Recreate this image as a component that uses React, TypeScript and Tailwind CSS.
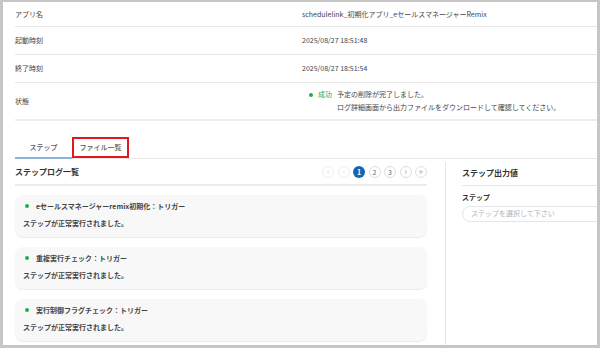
import { ChevronLeft, ChevronRight, ChevronsLeft, ChevronsRight } from "lucide-react";

const font = {
  fontFamily: '"Noto Sans CJK JP", "Liberation Sans", sans-serif',
};

const infoRows = [
  { label: "アプリ名", value: "schedulelink_初期化アプリ_eセールスマネージャーRemix", h: "h-[25px]" },
  { label: "起動時刻", value: "2025/08/27 18:51:48", h: "h-[28px]" },
  { label: "終了時刻", value: "2025/08/27 18:51:54", h: "h-[28px]" },
];

const steps = [
  "eセールスマネージャーremix初期化：トリガー",
  "重複実行チェック：トリガー",
  "実行制御フラグチェック：トリガー",
];

function PageButton({ children, active, disabled }: { children: React.ReactNode; active?: boolean; disabled?: boolean }) {
  return (
    <div
      className={
        active
          ? "w-[12px] h-[12px] rounded-full bg-[#1565b5] text-white flex items-center justify-center text-[7px] font-bold"
          : disabled
          ? "w-[12px] h-[12px] rounded-full border border-[#ececec] text-[#d0d0d0] flex items-center justify-center"
          : "w-[12px] h-[12px] rounded-full border border-[#dedede] text-[#666] flex items-center justify-center text-[7px]"
      }
    >
      {children}
    </div>
  );
}

export default function App() {
  return (
    <div
      style={font}
      className="w-[600px] h-[348px] bg-white border-t-2 border-l-[3px] border-r-[3px] border-b-[3px] border-[#c6c6c6] overflow-hidden text-[#555] text-[7px]"
    >
      <div className="pl-3 flex flex-col">
        {/* 基本情報 */}
        {infoRows.map((row) => (
          <div key={row.label} className={`${row.h} flex items-center border-b border-[#e6e6e6]`}>
            <div className="w-[287px] text-[#444]">{row.label}</div>
            <div className="text-[#444]">{row.value}</div>
          </div>
        ))}
        <div className="h-[38px] flex items-center border-b-2 border-[#ececec]">
          <div className="w-[287px] text-[#444]">状態</div>
          <div className="flex items-start gap-[5px] pl-[7px] leading-[13px]">
            <span className="w-[4px] h-[4px] rounded-full bg-[#1fae4f] mt-[5px]"></span>
            <span className="text-[#2aa84e]">成功</span>
            <div className="text-[#444]">
              <div>予定の削除が完了しました。</div>
              <div>ログ詳細画面から出力ファイルをダウンロードして確認してください。</div>
            </div>
          </div>
        </div>

        {/* タブ */}
        <div className="mt-[16px] flex items-end border-b border-[#e8e8e8]">
          <div className="w-[57px] h-[21px] flex items-center justify-center border-b-2 border-[#8fb4dc] -mb-px text-[#555] font-medium">
            ステップ
          </div>
          <div className="w-[57px] h-[21px] flex items-center justify-center border-2 border-[#e4161b] text-[#555] font-medium">
            ファイル一覧
          </div>
        </div>

        {/* 下段 */}
        <div className="flex">
          {/* ステップログ一覧 */}
          <div className="w-[412px] shrink-0 flex flex-col">
            <div className="h-[27px] flex items-center justify-between border-b-2 border-[#ececec] pt-[1px]">
              <div className="text-[#333] font-bold text-[8px]">ステップログ一覧</div>
              <div className="flex gap-[3.5px]">
                <PageButton disabled>
                  <ChevronsLeft size={6} />
                </PageButton>
                <PageButton disabled>
                  <ChevronLeft size={6} />
                </PageButton>
                <PageButton active>1</PageButton>
                <PageButton>2</PageButton>
                <PageButton>3</PageButton>
                <PageButton>
                  <ChevronRight size={6} />
                </PageButton>
                <PageButton>
                  <ChevronsRight size={6} />
                </PageButton>
              </div>
            </div>
            <div className="flex flex-col gap-[10px] pt-[9px]">
              {steps.map((s) => (
                <div
                  key={s}
                  className="h-[42px] rounded-[8px] bg-[#f8f8f8] shadow-[0_1px_1px_rgba(0,0,0,0.08)] pl-[8px] pt-[6px] flex flex-col gap-[6px]"
                >
                  <div className="flex items-center gap-[7px] pl-[2px] text-[#444] font-bold">
                    <span className="w-[4px] h-[4px] rounded-full bg-[#1fae4f]"></span>
                    {s}
                  </div>
                  <div className="text-[#444] font-bold">ステップが正常実行されました。</div>
                </div>
              ))}
            </div>
          </div>

          {/* 区切り */}
          <div className="ml-[18px] mt-[3px] w-px h-[190px] shrink-0 bg-[#e6e6e6]"></div>

          {/* ステップ出力値 */}
          <div className="w-[220px] shrink-0 pl-[16px]">
            <div className="h-[27px] flex items-center border-b border-[#e6e6e6] pt-[1px]">
              <div className="text-[#333] font-bold text-[8px]">ステップ出力値</div>
            </div>
            <div className="mt-[6px] text-[#333] font-bold">ステップ</div>
            <div className="mt-[3px] h-[16px] w-[200px] rounded-full border border-[#e2e6ea] flex items-center pl-[8px] text-[#b5b5b5]">
              ステップを選択して下さい
            </div>
          </div>
        </div>
      </div>
    </div>
  );
}
